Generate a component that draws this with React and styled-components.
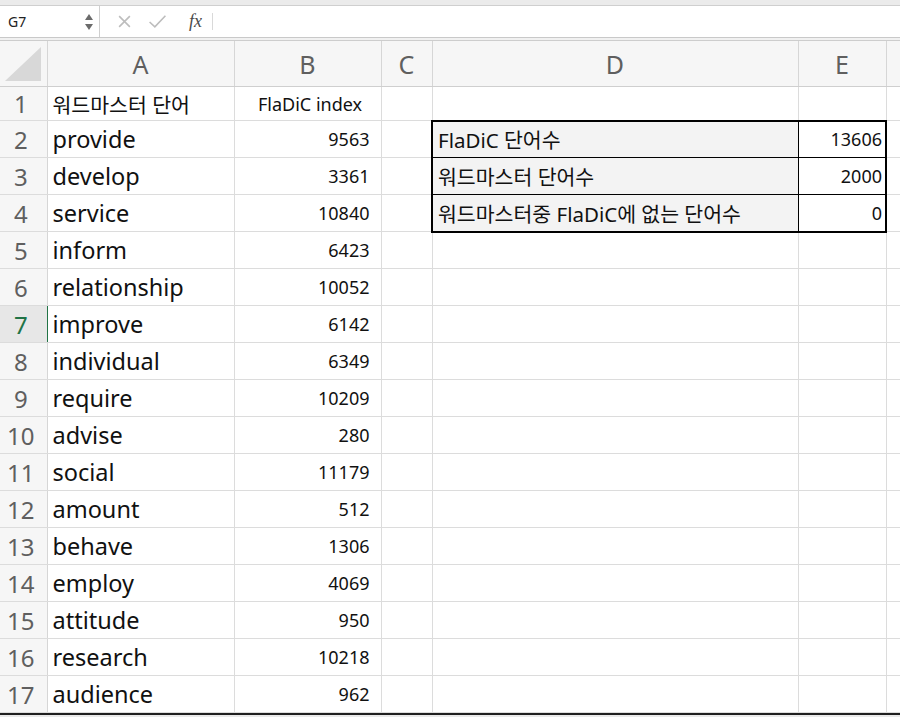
import React from 'react';
import styled, { createGlobalStyle } from 'styled-components';

const GlobalStyle = createGlobalStyle`
  body {
    margin: 0;
    background: #ffffff;
    font-family: 'Noto Sans', 'Noto Sans CJK KR', sans-serif;
    overflow: hidden;
  }
`;

const GRID = '#dcdcdc';
const GREEN = '#217346';

const Window = styled.div`
  width: 900px;
  height: 717px;
  overflow: hidden;
  background: #e9e9e9;
`;

const TopStrip = styled.div`
  height: 5px;
  background: #ebebeb;
  border-bottom: 1px solid #cfcfcf;
`;

const FormulaBar = styled.div`
  display: flex;
  align-items: center;
  height: 31px;
  background: #ffffff;
  border-bottom: 1px solid #c9c9c9;
`;

const NameBox = styled.div`
  display: flex;
  align-items: center;
  justify-content: space-between;
  width: 100px;
  height: 100%;
  box-sizing: border-box;
  padding: 0 6px 0 8px;
  border-right: 1px solid #cfcfcf;
  font-size: 14px;
  color: #222;
`;

const Spinner = styled.div`
  display: flex;
  flex-direction: column;
  gap: 4px;
`;

const Tri = styled.span`
  width: 0;
  height: 0;
  border-left: 4px solid transparent;
  border-right: 4px solid transparent;
  ${p => (p.$down ? 'border-top: 6px solid #6b6b6b;' : 'border-bottom: 6px solid #6b6b6b;')}
`;

const FxTools = styled.div`
  display: flex;
  align-items: center;
  padding-left: 8px;
  height: 100%;
`;

const ToolIcon = styled.span`
  display: inline-flex;
  width: 33px;
  justify-content: center;
`;

const FxLabel = styled.span`
  font-family: 'Liberation Serif', serif;
  font-style: italic;
  font-size: 18px;
  color: #4a4a4a;
  margin-left: 15px;
`;

const Divider = styled.span`
  width: 1px;
  height: 17px;
  background: #d9d9d9;
  margin-left: 10px;
`;

const Gap = styled.div`
  height: 2px;
  background: #f1f1f1;
  border-bottom: 1px solid #cdcdcd;
`;

const Sheet = styled.table`
  border-collapse: collapse;
  table-layout: fixed;
  width: 900px;
  background: #ffffff;
`;

const ColHead = styled.th`
  height: 45px;
  padding: 0;
  background: #f6f6f6;
  border-right: 1px solid #d6d6d6;
  border-bottom: 1px solid #cfcfcf;
  font-weight: 400;
  font-size: 25px;
  color: #5f5f5f;
  text-align: center;
  vertical-align: middle;
`;

const Corner = styled(ColHead)`
  svg {
    display: block;
    margin: 0 auto;
  }
`;

const RowHead = styled.th`
  padding: 0 5px 0 0;
  background: ${p => (p.$active ? '#e7e7e7' : '#f6f6f6')};
  border-right: 1px solid ${p => (p.$active ? GREEN : '#d6d6d6')};
  border-bottom: 1px solid ${GRID};
  font-weight: 400;
  font-size: 24px;
  color: ${p => (p.$active ? GREEN : '#5f5f5f')};
  text-align: center;
  vertical-align: middle;
`;

const Row = styled.tr`
  height: ${p => p.$h}px;
`;

const Cell = styled.td`
  padding: ${p => (p.$align === 'right' ? `0 ${p.$pad ?? 3}px 0 0` : '0 0 0 5px')};
  font-size: ${p => p.$size || 18}px;
  color: #111;
  text-align: ${p => p.$align || 'left'};
  vertical-align: middle;
  white-space: nowrap;
  overflow: hidden;
  background: ${p => (p.$shade ? '#f3f3f3' : '#ffffff')};
  border-right: 1px solid ${GRID};
  border-bottom: 1px solid ${GRID};
  ${p => p.$box && 'border: 1px solid #000;'}
  ${p => p.$bt && 'border-top: 2px solid #000;'}
  ${p => p.$bb && 'border-bottom: 2px solid #000;'}
  ${p => p.$bl && 'border-left: 2px solid #000;'}
  ${p => p.$br && 'border-right: 2px solid #000;'}
`;

const BottomEdge = styled.div`
  height: 2px;
  background: #1f1f1f;
`;

const words = [
  ['provide', 9563],
  ['develop', 3361],
  ['service', 10840],
  ['inform', 6423],
  ['relationship', 10052],
  ['improve', 6142],
  ['individual', 6349],
  ['require', 10209],
  ['advise', 280],
  ['social', 11179],
  ['amount', 512],
  ['behave', 1306],
  ['employ', 4069],
  ['attitude', 950],
  ['research', 10218],
  ['audience', 962],
];

const summary = [
  ['FlaDiC 단어수', 13606],
  ['워드마스터 단어수', 2000],
  ['워드마스터중 FlaDiC에 없는 단어수', 0],
];

const widths = [47, 187, 147, 51, 366, 88, 14];

export default function App() {
  return (
    <Window>
      <GlobalStyle />
      <TopStrip />
      <FormulaBar>
        <NameBox>
          <span>G7</span>
          <Spinner>
            <Tri />
            <Tri $down />
          </Spinner>
        </NameBox>
        <FxTools>
          <ToolIcon>
            <svg width="15" height="15" viewBox="0 0 14 14">
              <path d="M2 2 L12 12 M12 2 L2 12" stroke="#bdbdbd" strokeWidth="1.5" />
            </svg>
          </ToolIcon>
          <ToolIcon>
            <svg width="19" height="15" viewBox="0 0 18 14">
              <path d="M1.5 7.5 L6.5 12 L16.5 1.5" stroke="#bdbdbd" strokeWidth="1.5" fill="none" />
            </svg>
          </ToolIcon>
          <FxLabel>fx</FxLabel>
          <Divider />
        </FxTools>
      </FormulaBar>
      <Gap />
      <Sheet>
        <colgroup>
          {widths.map((w, i) => (
            <col key={i} style={{ width: w }} />
          ))}
        </colgroup>
        <thead>
          <tr>
            <Corner>
              <svg width="40" height="38" viewBox="0 0 40 38">
                <polygon points="2,36 38,2 38,36" fill="#d8d8d8" />
              </svg>
            </Corner>
            {['A', 'B', 'C', 'D', 'E', ''].map((l, i) => (
              <ColHead key={i}>{l}</ColHead>
            ))}
          </tr>
        </thead>
        <tbody>
          <Row $h={33}>
            <RowHead>1</RowHead>
            <Cell $size={20.5}>워드마스터 단어</Cell>
            <Cell $align="center">FlaDiC index</Cell>
            <Cell />
            <Cell />
            <Cell />
            <Cell />
          </Row>
          {words.map(([w, n], i) => {
            const r = i + 2;
            const s = summary[i];
            const first = i === 0;
            const last = i === summary.length - 1;
            return (
              <Row key={w} $h={37}>
                <RowHead $active={r === 7}>{r}</RowHead>
                <Cell $size={23.5}>{w}</Cell>
                <Cell $align="right" $pad={11}>{n}</Cell>
                <Cell />
                {s ? (
                  <>
                    <Cell $box $shade $bl $bt={first} $bb={last} $size={20.5}>{s[0]}</Cell>
                    <Cell $box $align="right" $br $bt={first} $bb={last}>{s[1]}</Cell>
                  </>
                ) : (
                  <>
                    <Cell />
                    <Cell />
                  </>
                )}
                <Cell />
              </Row>
            );
          })}
        </tbody>
      </Sheet>
      <BottomEdge />
    </Window>
  );
}
